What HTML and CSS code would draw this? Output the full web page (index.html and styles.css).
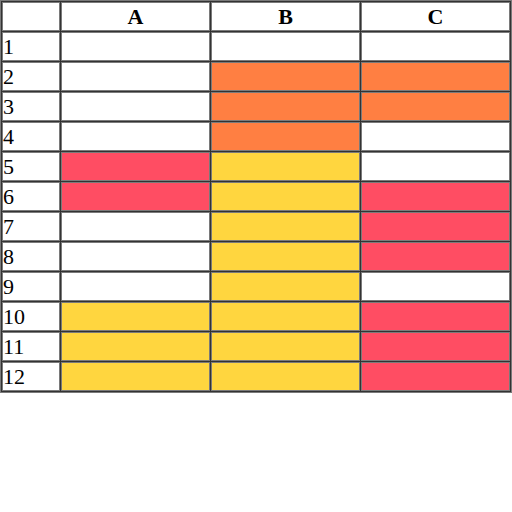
FILE: index.html
```html
<!DOCTYPE html>
<html lang="en">
<head>
  <meta charset="UTF-8">
  <title>Grid</title>
  <link rel="stylesheet" href="styles.css">
</head>
<body>
  <table class="sheet">
    <colgroup>
      <col class="col-num">
      <col class="col-data">
      <col class="col-data">
      <col class="col-data">
    </colgroup>
    <thead>
      <tr><th></th><th>A</th><th>B</th><th>C</th></tr>
    </thead>
    <tbody>
      <tr><td>1</td><td></td><td></td><td></td></tr>
      <tr><td>2</td><td></td><td class="orange"></td><td class="orange"></td></tr>
      <tr><td>3</td><td></td><td class="orange"></td><td class="orange"></td></tr>
      <tr><td>4</td><td></td><td class="orange"></td><td></td></tr>
      <tr><td>5</td><td class="red"></td><td class="yellow"></td><td></td></tr>
      <tr><td>6</td><td class="red"></td><td class="yellow"></td><td class="red"></td></tr>
      <tr><td>7</td><td></td><td class="yellow"></td><td class="red"></td></tr>
      <tr><td>8</td><td></td><td class="yellow"></td><td class="red"></td></tr>
      <tr><td>9</td><td></td><td class="yellow"></td><td></td></tr>
      <tr><td>10</td><td class="yellow"></td><td class="yellow"></td><td class="red"></td></tr>
      <tr><td>11</td><td class="yellow"></td><td class="yellow"></td><td class="red"></td></tr>
      <tr><td>12</td><td class="yellow"></td><td class="yellow"></td><td class="red"></td></tr>
    </tbody>
  </table>
</body>
</html>
```

FILE: styles.css
```css
body {
  margin: 0;
  background: #fff;
  font-family: "Liberation Serif", "Times New Roman", serif;
}

.sheet {
  width: 512px;
  table-layout: fixed;
  border-collapse: separate;
  border-spacing: 1px;
  background: #333;
  border: 1px solid #7a7a7a;
}

.col-num {
  width: 58px;
}

.sheet th,
.sheet td {
  height: 27px;
  padding: 0;
  border: 1px solid #7a7a7a;
  background: #fff;
  color: #000;
  font-size: 22px;
  line-height: 25px;
}

.sheet th {
  text-align: center;
  font-weight: bold;
}

.sheet td {
  text-align: left;
}

.sheet td.orange {
  background: #ff7f42;
}

.sheet td.red {
  background: #ff4d63;
}

.sheet td.yellow {
  background: #ffd63f;
}
```
